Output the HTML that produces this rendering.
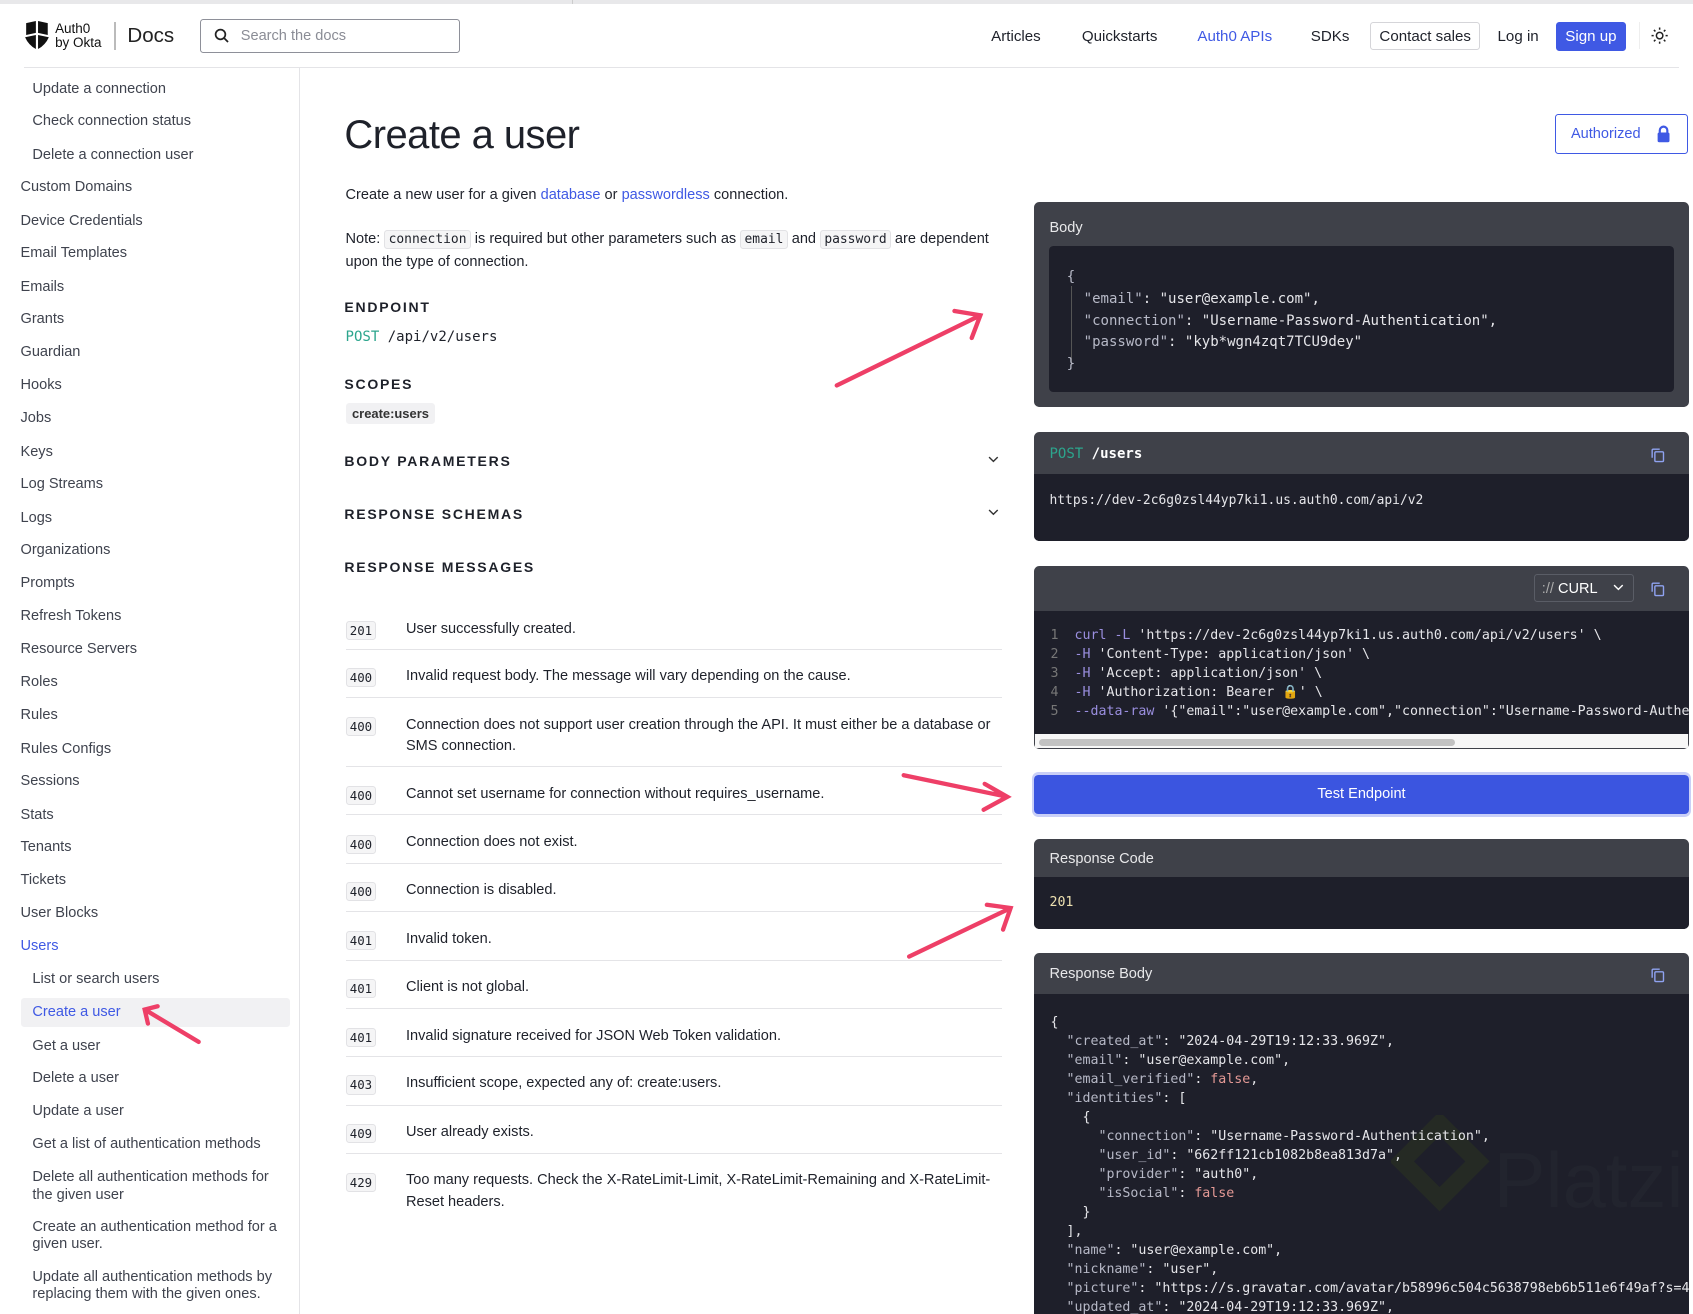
<!DOCTYPE html>
<html><head><meta charset="utf-8"><style>
html,body{margin:0;padding:0;background:#fff;overflow:hidden}
#w{zoom:1.0797;width:1568px;height:1217px;position:relative;font-family:"Liberation Sans",sans-serif;color:#1e212a;overflow:hidden}
.a{position:absolute}
.mono{font-family:"DejaVu Sans Mono","Liberation Mono",monospace}
.nav{font-size:14px;color:#1e212a}
.sb{position:absolute;font-size:13.5px;color:#3f434e;line-height:16px}
.h{font-size:13px;font-weight:bold;letter-spacing:1.6px;color:#1e212a}
code.c{font-family:"DejaVu Sans Mono",monospace;font-size:12px;background:#f5f5f6;border:1px solid #e2e2e5;border-radius:3px;padding:1px 3px}
.row{position:absolute;left:320px;width:608px;border-bottom:1px solid #e4e4e7;font-size:13.5px}
.code{position:absolute;left:320px;font-family:"DejaVu Sans Mono",monospace;font-size:11.5px;background:#f5f5f6;border:1px solid #e2e2e5;border-radius:3px;padding:1px 3px;color:#1e212a}
.msg{position:absolute;left:56px;width:550px;line-height:20px;color:#1e212a}
.panel{position:absolute;left:958px;width:606px;background:#3f4149;border-radius:5px;overflow:hidden}
.ph{color:#e8e8ea;font-size:13.5px;position:absolute;left:14px}
.dark{position:absolute;background:#1e1f2a}
.k{color:#b7b9c7}.s{color:#e6e6ea}.f{color:#e59a96}.p{color:#9b8fe0}
pre{margin:0;font-family:"DejaVu Sans Mono",monospace;font-size:12.3px;color:#e6e6ea}
</style></head><body><div id="w">
<div class="a" style="left:0;top:0;width:1568px;height:4px;background:#e8e8ea"></div>
<div class="a" style="left:530px;top:0;width:1px;height:4px;background:#ccc"></div>
<svg class="a" style="left:22px;top:19px" width="24" height="28" viewBox="0 0 24 28"><path d="M2 2 L11 0 L11 11 L2 13 Z M13 0 L22 2 L22 13 L13 11 Z M1 15 L11 13 L11 26 Q4 22 1 15 Z M13 13 L23 15 Q20 22 13 26 Z" fill="#111"/></svg>
<div class="a" style="left:51px;top:20px;font-size:12.5px;line-height:13px;color:#111">Auth0<br>by Okta</div>
<div class="a" style="left:106px;top:20px;width:1px;height:26px;background:#bbb"></div>
<div class="a" style="left:118px;top:22px;font-size:19px;color:#222">Docs</div>
<div class="a" style="left:185px;top:18px;width:239px;height:29px;border:1px solid #8e9099;border-radius:3px"></div>
<svg class="a" style="left:198px;top:26px" width="14" height="14" viewBox="0 0 14 14"><circle cx="6" cy="6" r="4.5" fill="none" stroke="#222" stroke-width="1.6"/><path d="M9.5 9.5L13 13" stroke="#222" stroke-width="1.6"/></svg>
<div class="a" style="left:223px;top:26px;font-size:13.5px;color:#8a8c95">Search the docs</div>
<div class="a nav" style="left:918px;top:26px">Articles</div>
<div class="a nav" style="left:1002px;top:26px">Quickstarts</div>
<div class="a nav" style="left:1109px;top:26px;color:#3f59e4">Auth0 APIs</div>
<div class="a nav" style="left:1214px;top:26px">SDKs</div>
<div class="a nav" style="left:1269px;top:20px;height:26px;border:1px solid #d5d5d9;border-radius:3px;text-align:center;line-height:26px;box-sizing:border-box;width:102px">Contact sales</div>
<div class="a nav" style="left:1387px;top:26px">Log in</div>
<div class="a nav" style="left:1441px;top:20px;width:65px;height:27px;background:#3f59e4;color:#fff;border-radius:3px;text-align:center;line-height:27px">Sign up</div>
<div class="a" style="left:1518px;top:20px;width:1px;height:25px;background:#eee"></div>
<svg class="a" style="left:1529px;top:25px" width="16" height="16" viewBox="0 0 16 16"><circle cx="8" cy="8" r="3" fill="none" stroke="#222" stroke-width="1.4"/><g stroke="#222" stroke-width="1.4"><path d="M8 0.5v2M8 13.5v2M0.5 8h2M13.5 8h2M2.7 2.7l1.4 1.4M11.9 11.9l1.4 1.4M2.7 13.3l1.4-1.4M11.9 4.1l1.4-1.4"/></g></svg>
<div class="a" style="left:22px;top:62px;width:1533px;height:1px;background:#e4e4e7"></div>
<div class="a" style="left:277px;top:63px;width:1px;height:1154px;background:#e4e4e7"></div>
<div class="sb" style="left:30px;top:75px">Update a connection</div>
<div class="sb" style="left:30px;top:105px">Check connection status</div>
<div class="sb" style="left:30px;top:136px">Delete a connection user</div>
<div class="sb" style="left:19px;top:166px">Custom Domains</div>
<div class="sb" style="left:19px;top:197px">Device Credentials</div>
<div class="sb" style="left:19px;top:227px">Email Templates</div>
<div class="sb" style="left:19px;top:258px">Emails</div>
<div class="sb" style="left:19px;top:288px">Grants</div>
<div class="sb" style="left:19px;top:319px">Guardian</div>
<div class="sb" style="left:19px;top:349px">Hooks</div>
<div class="sb" style="left:19px;top:380px">Jobs</div>
<div class="sb" style="left:19px;top:411px">Keys</div>
<div class="sb" style="left:19px;top:441px">Log Streams</div>
<div class="sb" style="left:19px;top:472px">Logs</div>
<div class="sb" style="left:19px;top:502px">Organizations</div>
<div class="sb" style="left:19px;top:533px">Prompts</div>
<div class="sb" style="left:19px;top:563px">Refresh Tokens</div>
<div class="sb" style="left:19px;top:594px">Resource Servers</div>
<div class="sb" style="left:19px;top:624px">Roles</div>
<div class="sb" style="left:19px;top:655px">Rules</div>
<div class="sb" style="left:19px;top:686px">Rules Configs</div>
<div class="sb" style="left:19px;top:716px">Sessions</div>
<div class="sb" style="left:19px;top:747px">Stats</div>
<div class="sb" style="left:19px;top:777px">Tenants</div>
<div class="sb" style="left:19px;top:808px">Tickets</div>
<div class="sb" style="left:19px;top:838px">User Blocks</div>
<div class="sb" style="left:19px;top:869px;color:#3f59e4">Users</div>
<div class="sb" style="left:30px;top:899px">List or search users</div>
<div class="a" style="left:19px;top:924px;width:250px;height:27px;background:#f1f1f3;border-radius:3px"></div>
<div class="sb" style="left:30px;top:930px;color:#3f59e4">Create a user</div>
<div class="sb" style="left:30px;top:961px">Get a user</div>
<div class="sb" style="left:30px;top:991px">Delete a user</div>
<div class="sb" style="left:30px;top:1022px">Update a user</div>
<div class="sb" style="left:30px;top:1052px">Get a list of authentication methods</div>
<div class="sb" style="left:30px;top:1083px;width:240px">Delete all authentication methods for the given user</div>
<div class="sb" style="left:30px;top:1129px;width:240px">Create an authentication method for a given user.</div>
<div class="sb" style="left:30px;top:1175px;width:240px">Update all authentication methods by replacing them with the given ones.</div>
<div class="a" style="left:319px;top:105px;font-size:37px;letter-spacing:-0.5px;color:#1e212a">Create a user</div>
<div class="a" style="left:1440px;top:106px;width:123px;height:37px;border:1px solid #3f59e4;border-radius:3px;box-sizing:border-box"></div>
<div class="a" style="left:1455px;top:117px;font-size:13.5px;color:#3f59e4">Authorized</div>
<svg class="a" style="left:1534px;top:116px" width="14" height="17" viewBox="0 0 14 17"><path d="M3.5 7V5a3.5 3.5 0 0 1 7 0v2" fill="none" stroke="#3f59e4" stroke-width="2"/><rect x="1.5" y="7" width="11" height="9" rx="1.5" fill="#3f59e4"/></svg>
<div class="a" style="left:320px;top:173px;font-size:13.5px">Create a new user for a given <span style="color:#3f59e4">database</span> or <span style="color:#3f59e4">passwordless</span> connection.</div>
<div class="a" style="left:320px;top:211px;font-size:13.5px;line-height:21px;width:600px">Note: <code class="c">connection</code> is required but other parameters such as <code class="c">email</code> and <code class="c">password</code> are dependent upon the type of connection.</div>
<div class="a h" style="left:319px;top:277px">ENDPOINT</div>
<div class="a mono" style="left:320px;top:305px;font-size:13px"><span style="color:#2ca58d">POST</span> /api/v2/users</div>
<div class="a h" style="left:319px;top:348px">SCOPES</div>
<div class="a" style="left:320px;top:373px;padding:3px 6px;background:#f1f1f3;border-radius:3px;font-size:12px;font-weight:bold;color:#333">create:users</div>
<div class="a h" style="left:319px;top:420px">BODY PARAMETERS</div>
<div class="a h" style="left:319px;top:469px">RESPONSE SCHEMAS</div>
<div class="a h" style="left:319px;top:518px">RESPONSE MESSAGES</div>
<svg class="a" style="left:915px;top:422px" width="10" height="60"><path d="M1 1l4 4 4-4M1 50l4 4 4-4" fill="none" stroke="#333" stroke-width="1.3"/></svg>
<div class="row" style="top:563px;height:38px"><span class="code" style="left:0;top:12px">201</span><div class="msg" style="top:10px">User successfully created.</div></div>
<div class="row" style="top:602px;height:44px"><span class="code" style="left:0;top:17px">400</span><div class="msg" style="top:15px">Invalid request body. The message will vary depending on the cause.</div></div>
<div class="row" style="top:647px;height:62px"><span class="code" style="left:0;top:17px">400</span><div class="msg" style="top:15px">Connection does not support user creation through the API. It must either be a database or SMS connection.</div></div>
<div class="row" style="top:710px;height:44px"><span class="code" style="left:0;top:18px">400</span><div class="msg" style="top:16px">Cannot set username for connection without requires_username.</div></div>
<div class="row" style="top:755px;height:44px"><span class="code" style="left:0;top:18px">400</span><div class="msg" style="top:16px">Connection does not exist.</div></div>
<div class="row" style="top:800px;height:44px"><span class="code" style="left:0;top:17px">400</span><div class="msg" style="top:15px">Connection is disabled.</div></div>
<div class="row" style="top:845px;height:44px"><span class="code" style="left:0;top:17px">401</span><div class="msg" style="top:15px">Invalid token.</div></div>
<div class="row" style="top:890px;height:44px"><span class="code" style="left:0;top:17px">401</span><div class="msg" style="top:15px">Client is not global.</div></div>
<div class="row" style="top:935px;height:43px"><span class="code" style="left:0;top:17px">401</span><div class="msg" style="top:15px">Invalid signature received for JSON Web Token validation.</div></div>
<div class="row" style="top:979px;height:44px"><span class="code" style="left:0;top:17px">403</span><div class="msg" style="top:15px">Insufficient scope, expected any of: create:users.</div></div>
<div class="row" style="top:1024px;height:44px"><span class="code" style="left:0;top:17px">409</span><div class="msg" style="top:15px">User already exists.</div></div>
<div class="a" style="left:320px;top:1086px"><span class="code" style="left:0;top:0">429</span></div>
<div class="a" style="left:376px;top:1084px;width:550px;line-height:20px;font-size:13.5px">Too many requests. Check the X-RateLimit-Limit, X-RateLimit-Remaining and X-RateLimit-Reset headers.</div>
<div class="panel" style="top:187px;height:190px">
 <div class="ph" style="top:17px">Body</div>
 <div class="dark" style="left:14px;top:41px;width:578px;height:135px;border-radius:4px"></div>
 <div class="a" style="left:34px;top:78px;width:1px;height:72px;background:#555"></div>
 <pre class="a" style="left:30px;top:60px;line-height:20.3px;font-size:13px"><span class="k">{</span>
  <span class="k">"email"</span>: "user@example.com",
  <span class="k">"connection"</span>: "Username-Password-Authentication",
  <span class="k">"password"</span>: "kyb*wgn4zqt7TCU9dey"
<span class="k">}</span></pre>
</div>
<div class="panel" style="top:400px;height:101px">
 <div class="a mono" style="left:14px;top:13px;font-size:13px;color:#fff"><span style="color:#2ca58d">POST</span> <b>/users</b></div>
 <svg class="a" style="left:570px;top:14px" width="15" height="15" viewBox="0 0 15 15"><rect x="4.5" y="4.5" width="8" height="9" rx="1" fill="none" stroke="#8fa2f0" stroke-width="1.3"/><path d="M2 10V3a1 1 0 0 1 1-1h6" fill="none" stroke="#8fa2f0" stroke-width="1.3"/></svg>
 <div class="dark" style="left:0;top:39px;width:606px;height:62px"></div>
 <pre class="a" style="left:14px;top:57px;font-size:12px">https://dev-2c6g0zsl44yp7ki1.us.auth0.com/api/v2</pre>
</div>
<div class="panel" style="top:524px;height:170px">
 <div class="a" style="left:463px;top:8px;width:92px;height:26px;border:1px solid #5a5d66;border-radius:3px;box-sizing:border-box"></div>
 <div class="a" style="left:470px;top:14px;font-size:13.5px;color:#fff"><span style="color:#aaa">://</span> CURL</div>
 <svg class="a" style="left:536px;top:17px" width="10" height="7"><path d="M1 1l4 4 4-4" fill="none" stroke="#fff" stroke-width="1.3"/></svg>
 <svg class="a" style="left:570px;top:14px" width="15" height="15" viewBox="0 0 15 15"><rect x="4.5" y="4.5" width="8" height="9" rx="1" fill="none" stroke="#8fa2f0" stroke-width="1.3"/><path d="M2 10V3a1 1 0 0 1 1-1h6" fill="none" stroke="#8fa2f0" stroke-width="1.3"/></svg>
 <div class="dark" style="left:0;top:42px;width:606px;height:114px"></div>
 <pre class="a" style="left:15px;top:56px;line-height:17.6px;white-space:pre"><span style="color:#777">1</span>  <span class="p">curl -L</span> 'https://dev-2c6g0zsl44yp7ki1.us.auth0.com/api/v2/users' \
<span style="color:#777">2</span>  <span class="p">-H</span> 'Content-Type: application/json' \
<span style="color:#777">3</span>  <span class="p">-H</span> 'Accept: application/json' \
<span style="color:#777">4</span>  <span class="p">-H</span> 'Authorization: Bearer <span style="color:#d4b24c">🔒</span>' \
<span style="color:#777">5</span>  <span class="p">--data-raw</span> '{"email":"user@example.com","connection":"Username-Password-Authe</pre>
 <div class="a" style="left:1px;top:156px;width:604px;height:13px;background:#f7f7f7"></div>
 <div class="a" style="left:4px;top:160px;width:386px;height:7px;background:#c2c2c2;border-radius:4px"></div>
</div>
<div class="a" style="left:956px;top:715px;width:610px;height:42px;background:#c9cff7;border-radius:6px"></div>
<div class="a" style="left:958px;top:718px;width:606px;height:36px;background:#3b55e0;border-radius:4px;color:#fff;font-size:13.5px;text-align:center;line-height:37px">Test Endpoint</div>
<div class="panel" style="top:777px;height:83px">
 <div class="ph" style="top:11px">Response Code</div>
 <div class="dark" style="left:0;top:35px;width:606px;height:48px"></div>
 <pre class="a" style="left:14px;top:52px;color:#ede0b0">201</pre>
</div>
<div class="panel" style="top:883px;height:340px">
 <div class="ph" style="top:12px">Response Body</div>
 <svg class="a" style="left:570px;top:13px" width="15" height="15" viewBox="0 0 15 15"><rect x="4.5" y="4.5" width="8" height="9" rx="1" fill="none" stroke="#8fa2f0" stroke-width="1.3"/><path d="M2 10V3a1 1 0 0 1 1-1h6" fill="none" stroke="#8fa2f0" stroke-width="1.3"/></svg>
 <div class="dark" style="left:0;top:38px;width:606px;height:302px"></div>
 <svg class="a" style="left:330px;top:150px" width="280" height="120"><path d="M45 8 L80 43 L45 78 L10 43 Z" fill="none" stroke="#252a24" stroke-width="16"/><text x="95" y="85" font-family="Liberation Sans" font-size="72" fill="#22242e">Platzi</text></svg>
 <pre class="a" style="left:15px;top:55px;line-height:17.6px">{
  <span class="k">"created_at"</span>: "2024-04-29T19:12:33.969Z",
  <span class="k">"email"</span>: "user@example.com",
  <span class="k">"email_verified"</span>: <span class="f">false</span>,
  <span class="k">"identities"</span>: [
    {
      <span class="k">"connection"</span>: "Username-Password-Authentication",
      <span class="k">"user_id"</span>: "662ff121cb1082b8ea813d7a",
      <span class="k">"provider"</span>: "auth0",
      <span class="k">"isSocial"</span>: <span class="f">false</span>
    }
  ],
  <span class="k">"name"</span>: "user@example.com",
  <span class="k">"nickname"</span>: "user",
  <span class="k">"picture"</span>: "https://s.gravatar.com/avatar/b58996c504c5638798eb6b511e6f49af?s=480",
  <span class="k">"updated_at"</span>: "2024-04-29T19:12:33.969Z",</pre>
</div>
<svg class="a" style="left:0;top:0" width="1568" height="1217"><g stroke="#ee3f67" stroke-width="4" fill="none" stroke-linecap="round">
<path d="M775 357 L908 292 M884 288 L908 292 L900 313"/>
<path d="M837 718 L933 738 M912 726 L933 738 L911 750"/>
<path d="M842 886 L936 841 M914 838 L936 841 L929 861"/>
<path d="M184 965 L134 935 M146 932 L134 935 L137 948"/>
</g></svg>
</div></body></html>
